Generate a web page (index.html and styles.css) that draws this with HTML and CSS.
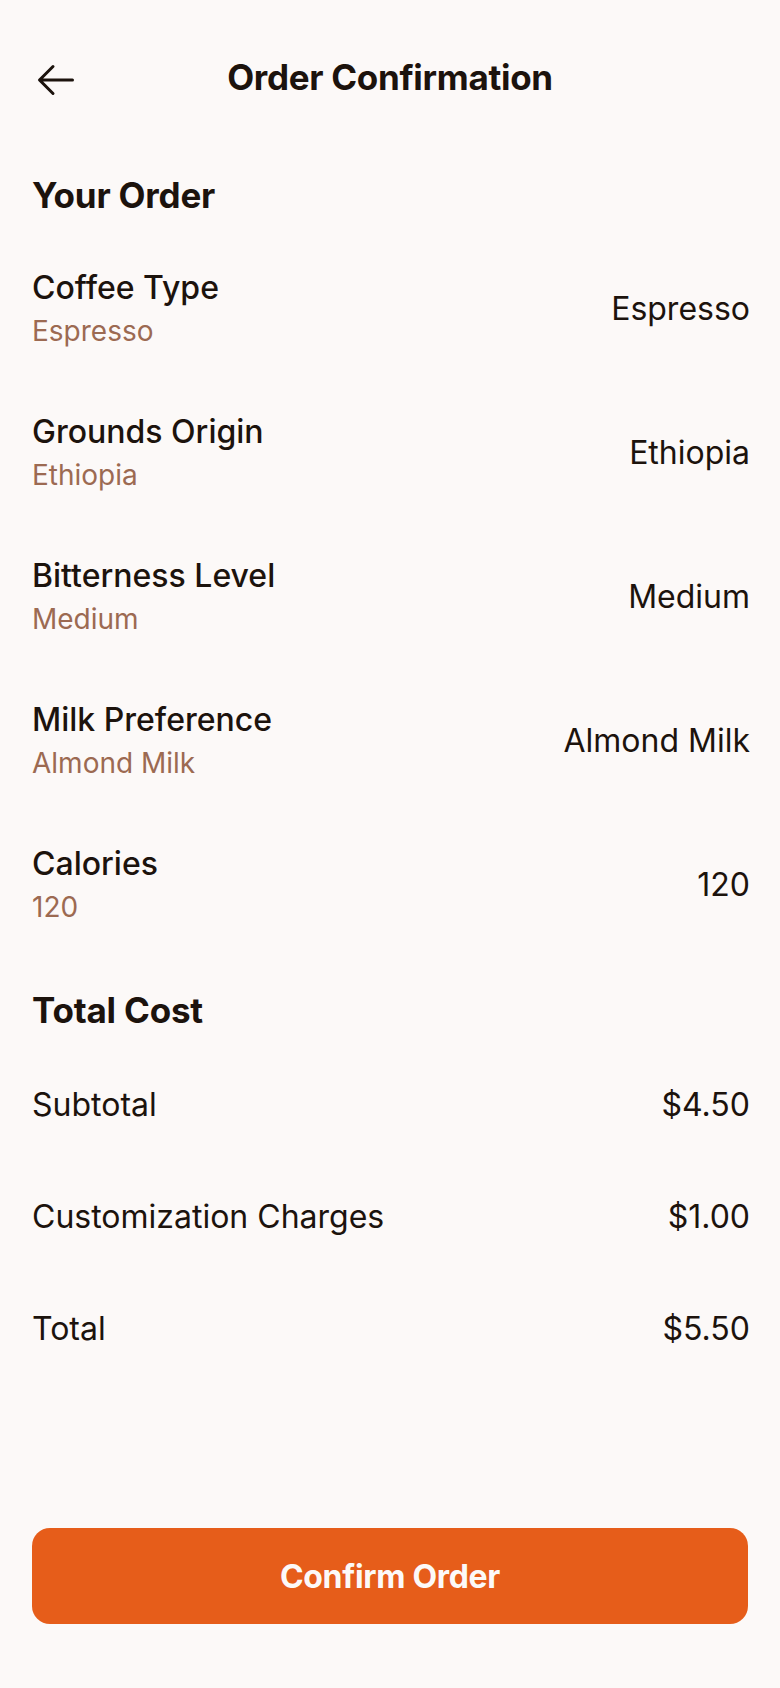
FILE: index.html
```html
<!DOCTYPE html>
<html lang="en">
<head>
<meta charset="utf-8">
<title>Order Confirmation</title>
<link rel="stylesheet" href="styles.css">
</head>
<body>
<div class="page">
  <header class="header">
    <button class="back" aria-label="Back">
      <svg width="48" height="48" viewBox="0 0 256 256" fill="currentColor"><path d="M224,128a8,8,0,0,1-8,8H59.31l58.35,58.34a8,8,0,0,1-11.32,11.32l-72-72a8,8,0,0,1,0-11.32l72-72a8,8,0,0,1,11.32,11.32L59.31,120H216A8,8,0,0,1,224,128Z"/></svg>
    </button>
    <h1 class="title">Order Confirmation</h1>
  </header>

  <main class="main">
    <h2 class="section-title first">Your Order</h2>
    <div class="item">
      <div class="item-text"><p class="label">Coffee Type</p><p class="sub">Espresso</p></div>
      <p class="value">Espresso</p>
    </div>
    <div class="item">
      <div class="item-text"><p class="label">Grounds Origin</p><p class="sub">Ethiopia</p></div>
      <p class="value">Ethiopia</p>
    </div>
    <div class="item">
      <div class="item-text"><p class="label">Bitterness Level</p><p class="sub">Medium</p></div>
      <p class="value">Medium</p>
    </div>
    <div class="item">
      <div class="item-text"><p class="label">Milk Preference</p><p class="sub">Almond Milk</p></div>
      <p class="value">Almond Milk</p>
    </div>
    <div class="item">
      <div class="item-text"><p class="label">Calories</p><p class="sub">120</p></div>
      <p class="value">120</p>
    </div>

    <h2 class="section-title second">Total Cost</h2>
    <div class="cost"><p class="cost-label">Subtotal</p><p class="cost-value">$4.50</p></div>
    <div class="cost"><p class="cost-label">Customization Charges</p><p class="cost-value">$1.00</p></div>
    <div class="cost"><p class="cost-label">Total</p><p class="cost-value">$5.50</p></div>
  </main>

  <footer class="footer">
    <button class="confirm">Confirm Order</button>
  </footer>
</div>
</body>
</html>
```
FILE: styles.css
```css
* { box-sizing: border-box; }
html, body { margin: 0; padding: 0; }
body {
  background: #fcf9f8;
  color: #1c130d;
  font-family: Inter, "Noto Sans", sans-serif;
}
p, h1, h2 { margin: 0; }
.page {
  min-height: 1688px;
  display: flex;
  flex-direction: column;
}
.header {
  display: flex;
  align-items: center;
  padding: 32px 32px 16px;
}
.back {
  width: 48px;
  height: 96px;
  padding: 0;
  border: 0;
  background: none;
  color: #1c130d;
  display: flex;
  align-items: center;
  justify-content: center;
}
.title {
  flex: 1;
  text-align: center;
  padding-right: 48px;
  padding-bottom: 6px;
  font-size: 35px;
  line-height: 45px;
  font-weight: 700;
  letter-spacing: -0.3px;
}
.main { flex: 1; }
.section-title {
  font-size: 35px;
  line-height: 45px;
  font-weight: 700;
  letter-spacing: -0.2px;
  padding: 0 32px;
}
.section-title.first { padding-top: 29px; padding-bottom: 19px; }
.section-title.second { padding-top: 31px; padding-bottom: 16px; }
.item {
  display: flex;
  align-items: center;
  justify-content: space-between;
  gap: 32px;
  min-height: 144px;
  padding: 16px 32px;
}
.item-text { display: flex; flex-direction: column; }
.label {
  font-size: 32px;
  line-height: 44px;
  font-weight: 500;
}
.sub {
  font-size: 28px;
  line-height: 42px;
  color: #9c6a52;
}
.value {
  font-size: 32px;
  line-height: 48px;
  margin-right: -2px;
}
.cost {
  display: flex;
  align-items: center;
  justify-content: space-between;
  gap: 32px;
  min-height: 112px;
  padding: 0 32px;
}
.cost-label, .cost-value {
  font-size: 32px;
  line-height: 48px;
}
.cost-value { margin-right: -2px; }
.footer {
  padding: 0 32px 64px;
  display: flex;
}
.confirm {
  flex: 1;
  height: 96px;
  border: 0;
  border-radius: 18px;
  background: #e65d1a;
  color: #fcf9f8;
  font-family: Inter, "Noto Sans", sans-serif;
  font-size: 32px;
  font-weight: 700;
  letter-spacing: -0.3px;
}
```
